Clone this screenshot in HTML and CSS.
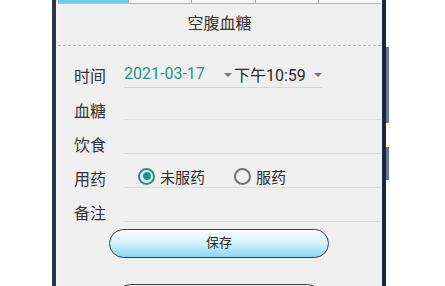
FILE: index.html
```html
<!DOCTYPE html>
<html lang="zh">
<head>
<meta charset="utf-8">
<link rel="stylesheet" href="styles.css">
</head>
<body>
<div class="phone">
  <div class="screen">
    <div class="tabs">
      <div class="tab active"></div>
      <div class="tab"></div>
      <div class="tab"></div>
      <div class="tab"></div>
      <div class="tab last"></div>
    </div>
    <div class="title">空腹血糖</div>
    <div class="form">
      <div class="row row-time">
        <div class="label">时间</div>
        <div class="field field-short">
          <span class="spinner date">2021-03-17<span class="arrow"></span></span>
          <span class="spinner time">下午10:59<span class="arrow"></span></span>
        </div>
      </div>
      <div class="row row-sm">
        <div class="label">血糖</div>
        <div class="field"></div>
      </div>
      <div class="row">
        <div class="label">饮食</div>
        <div class="field"></div>
      </div>
      <div class="row">
        <div class="label">用药</div>
        <div class="field radios">
          <span class="radio checked"><span class="dot"></span></span><span class="rtext">未服药</span>
          <span class="radio second"></span><span class="rtext">服药</span>
        </div>
      </div>
      <div class="row">
        <div class="label">备注</div>
        <div class="field"></div>
      </div>
    </div>
    <div class="btn-wrap">
      <div class="btn">保存</div>
    </div>
    <div class="btn-wrap">
      <div class="btn btn2"></div>
    </div>
  </div>
  <div class="side side1"></div>
  <div class="side side2"></div>
</div>
</body>
</html>
```
FILE: styles.css
```css
html, body {
  margin: 0;
  padding: 0;
  background: #ffffff;
  overflow: hidden;
}
body {
  width: 445px;
  height: 286px;
  font-family: Roboto, "Noto Sans CJK SC", sans-serif;
  color: #2a2a2a;
}
.phone {
  position: relative;
  margin-left: 52px;
  width: 326px;
  height: 286px;
  border-left: 4px solid #2e3640;
  border-right: 4px solid #20262d;
  box-sizing: content-box;
  background: #efefef;
}
.screen {
  height: 286px;
  overflow: hidden;
  background: linear-gradient(to right, #f4f4f4 0, #efefef 10px, #efefef 100%);
}
.side {
  position: absolute;
  right: -7px;
  width: 3px;
  background: #62799a;
}
.side1 { top: 47px; height: 76px; }
.side2 { top: 147px; height: 33px; }

.tabs {
  display: flex;
  height: 3px;
  margin: 0 1px 0 2px;
  border-bottom: 1px solid #b9b9b9;
}
.tab {
  flex: 1;
  border-right: 1px solid #a9a9a9;
  background: #f6f6f6;
}
.tab.active {
  flex: 0 0 70px;
  background: #72cbec;
}
.tab.last { border-right: none; }

.title {
  height: 41px;
  line-height: 40px;
  text-align: center;
  font-size: 16px;
  color: #333;
  border-bottom: 1px dashed #bdbdbd;
  margin: 0 1px 0 2px;
}

.form {
  padding-left: 18px;
}
.row {
  display: flex;
  align-items: flex-end;
  height: 34px;
}
.row-time { height: 42px; }
.row-sm { height: 32px; }
.label {
  width: 50px;
  flex: 0 0 50px;
  font-size: 16px;
  line-height: 20px;
  height: 20px;
  margin-bottom: -2px;
  color: #333;
}
.row-time .label { margin-bottom: 1px; }
.field {
  flex: 1;
  height: 100%;
  border-bottom: 1px solid #dcdcdc;
  margin-right: 1px;
  box-sizing: border-box;
}
.field-short {
  flex: 0 0 196px;
  display: flex;
  align-items: center;
  padding-top: 14px;
  font-size: 16px;
  border-bottom-color: #d6d6d6;
}
.spinner {
  display: flex;
  align-items: center;
  white-space: nowrap;
}
.date {
  color: #1b968c;
  width: 110px;
}
.date .arrow { margin-left: auto; margin-right: 2px; }
.time { color: #2a2a2a; }
.time .arrow { margin-left: 8px; }
.arrow {
  display: inline-block;
  width: 0;
  height: 0;
  border-left: 4px solid transparent;
  border-right: 4px solid transparent;
  border-top: 4px solid #7a7a7a;
  margin-top: 2px;
}

.radios {
  display: flex;
  align-items: center;
  padding-top: 11px;
  padding-left: 14px;
  font-size: 15px;
}
.radio {
  width: 13px;
  height: 13px;
  border-radius: 50%;
  border: 2px solid #717171;
  display: flex;
  align-items: center;
  justify-content: center;
  flex: 0 0 auto;
}
.radio.checked { border-color: #16978a; }
.radio .dot {
  width: 8px;
  height: 8px;
  border-radius: 50%;
  background: #16978a;
}
.rtext {
  margin-left: 5px;
  color: #2a2a2a;
}
.radio.second { margin-left: 29px; }

.btn-wrap {
  display: flex;
  justify-content: center;
}
.btn {
  margin-top: 7px;
  width: 220px;
  height: 29px;
  box-sizing: border-box;
  border: 1.5px solid #3d3d3d;
  border-radius: 15px;
  background: linear-gradient(to bottom, #fbfeff 0%, #d8f2fb 45%, #8bd7f2 100%);
  text-align: center;
  line-height: 26px;
  font-size: 13px;
  color: #2a2a2a;
}
.btn2 {
  margin-top: 26px;
  width: 206px;
  background: #f0f0f0;
}
```
